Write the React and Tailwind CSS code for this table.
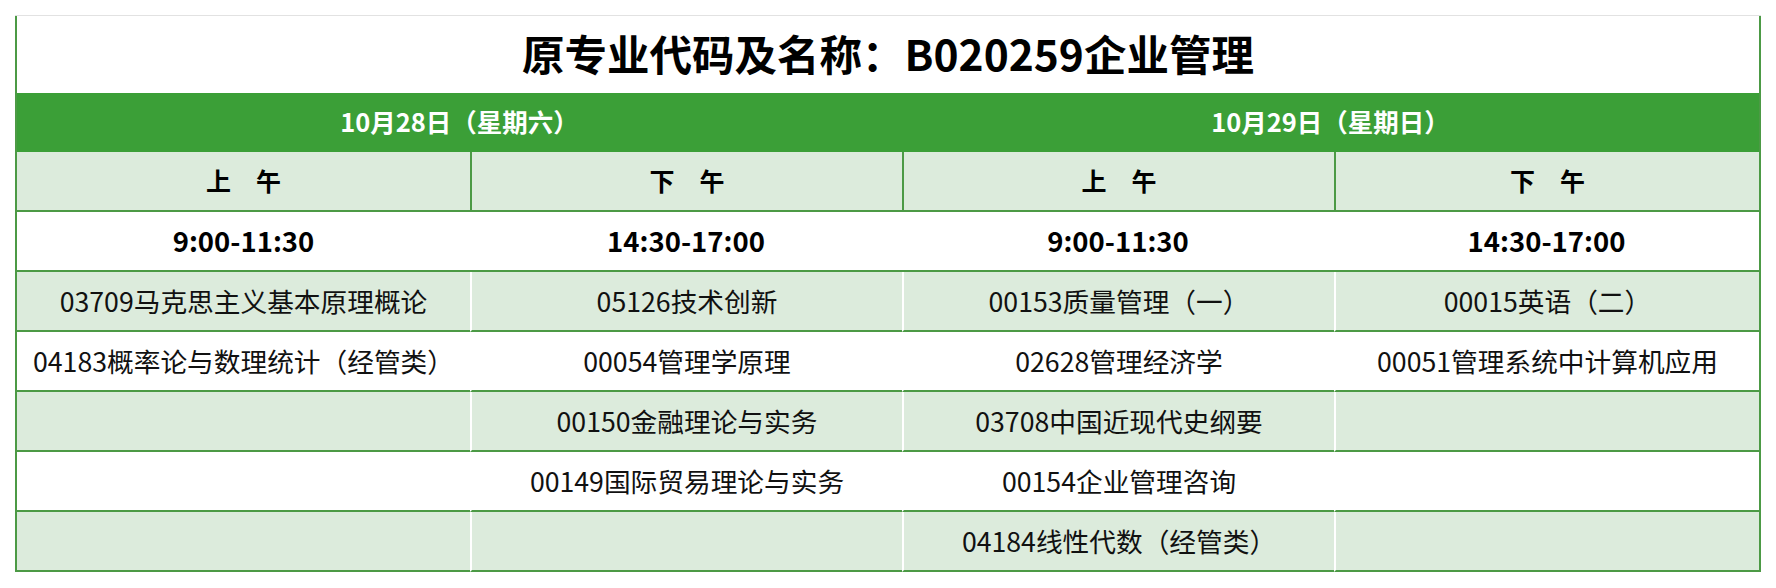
import React from 'react';

const days = [
  { date: '10月28日（星期六）', span: 'col-span-2' },
  { date: '10月29日（星期日）', span: 'col-span-2' },
];

const periods = ['上　午', '下　午', '上　午', '下　午'];
const times = ['9:00-11:30', '14:30-17:00', '9:00-11:30', '14:30-17:00'];

const rows = [
  ['03709马克思主义基本原理概论', '05126技术创新', '00153质量管理（一）', '00015英语（二）'],
  ['04183概率论与数理统计（经管类）', '00054管理学原理', '02628管理经济学', '00051管理系统中计算机应用'],
  ['', '00150金融理论与实务', '03708中国近现代史纲要', ''],
  ['', '00149国际贸易理论与实务', '00154企业管理咨询', ''],
  ['', '', '04184线性代数（经管类）', ''],
];

export default function App() {
  return (
    <div className="min-h-[588px] bg-white pt-[15px] pl-[15px] font-['Noto_Sans_CJK_SC','Microsoft_YaHei',sans-serif] text-[#111]">
      <div className="w-[1746px] border-t border-[#e2e2e2]">
        <div className="border-x-2 border-[#4c9a45]">
          <div className="flex h-[77px] items-center justify-center bg-white pb-[4px] text-[42.5px] font-bold text-black">
            原专业代码及名称：B020259企业管理
          </div>
          <div className="grid grid-cols-[453px_432px_432px_425px]">
            {days.map((d) => (
              <div
                key={d.date}
                className={`${d.span} flex h-[59px] items-center justify-center bg-[#3b9f37] pb-[3px] text-[25.5px] font-bold text-white`}
              >
                {d.date}
              </div>
            ))}
            {periods.map((p, i) => (
              <div
                key={'p' + i}
                className={`flex h-[60px] items-center justify-center border-b-2 border-[#4c9a45] bg-[#dcebdc] text-[25px] font-bold text-black ${i > 0 ? 'border-l-2' : ''}`}
              >
                {p}
              </div>
            ))}
            {times.map((t, i) => (
              <div
                key={'t' + i}
                className="flex h-[60px] items-center justify-center border-b-2 border-[#4c9a45] bg-white text-[27.5px] font-bold text-black"
              >
                {t}
              </div>
            ))}
            {rows.map((r, ri) =>
              r.map((c, ci) => (
                <div
                  key={ri + '-' + ci}
                  className={`flex h-[60px] items-center justify-center border-b-2 border-[#4c9a45] text-[26.7px] ${ri % 2 === 0 ? 'bg-[#dcebdc]' : 'bg-white'} ${ci > 0 ? 'border-l-2 border-l-white' : ''}`}
                >
                  {c}
                </div>
              ))
            )}
          </div>
        </div>
      </div>
    </div>
  );
}
